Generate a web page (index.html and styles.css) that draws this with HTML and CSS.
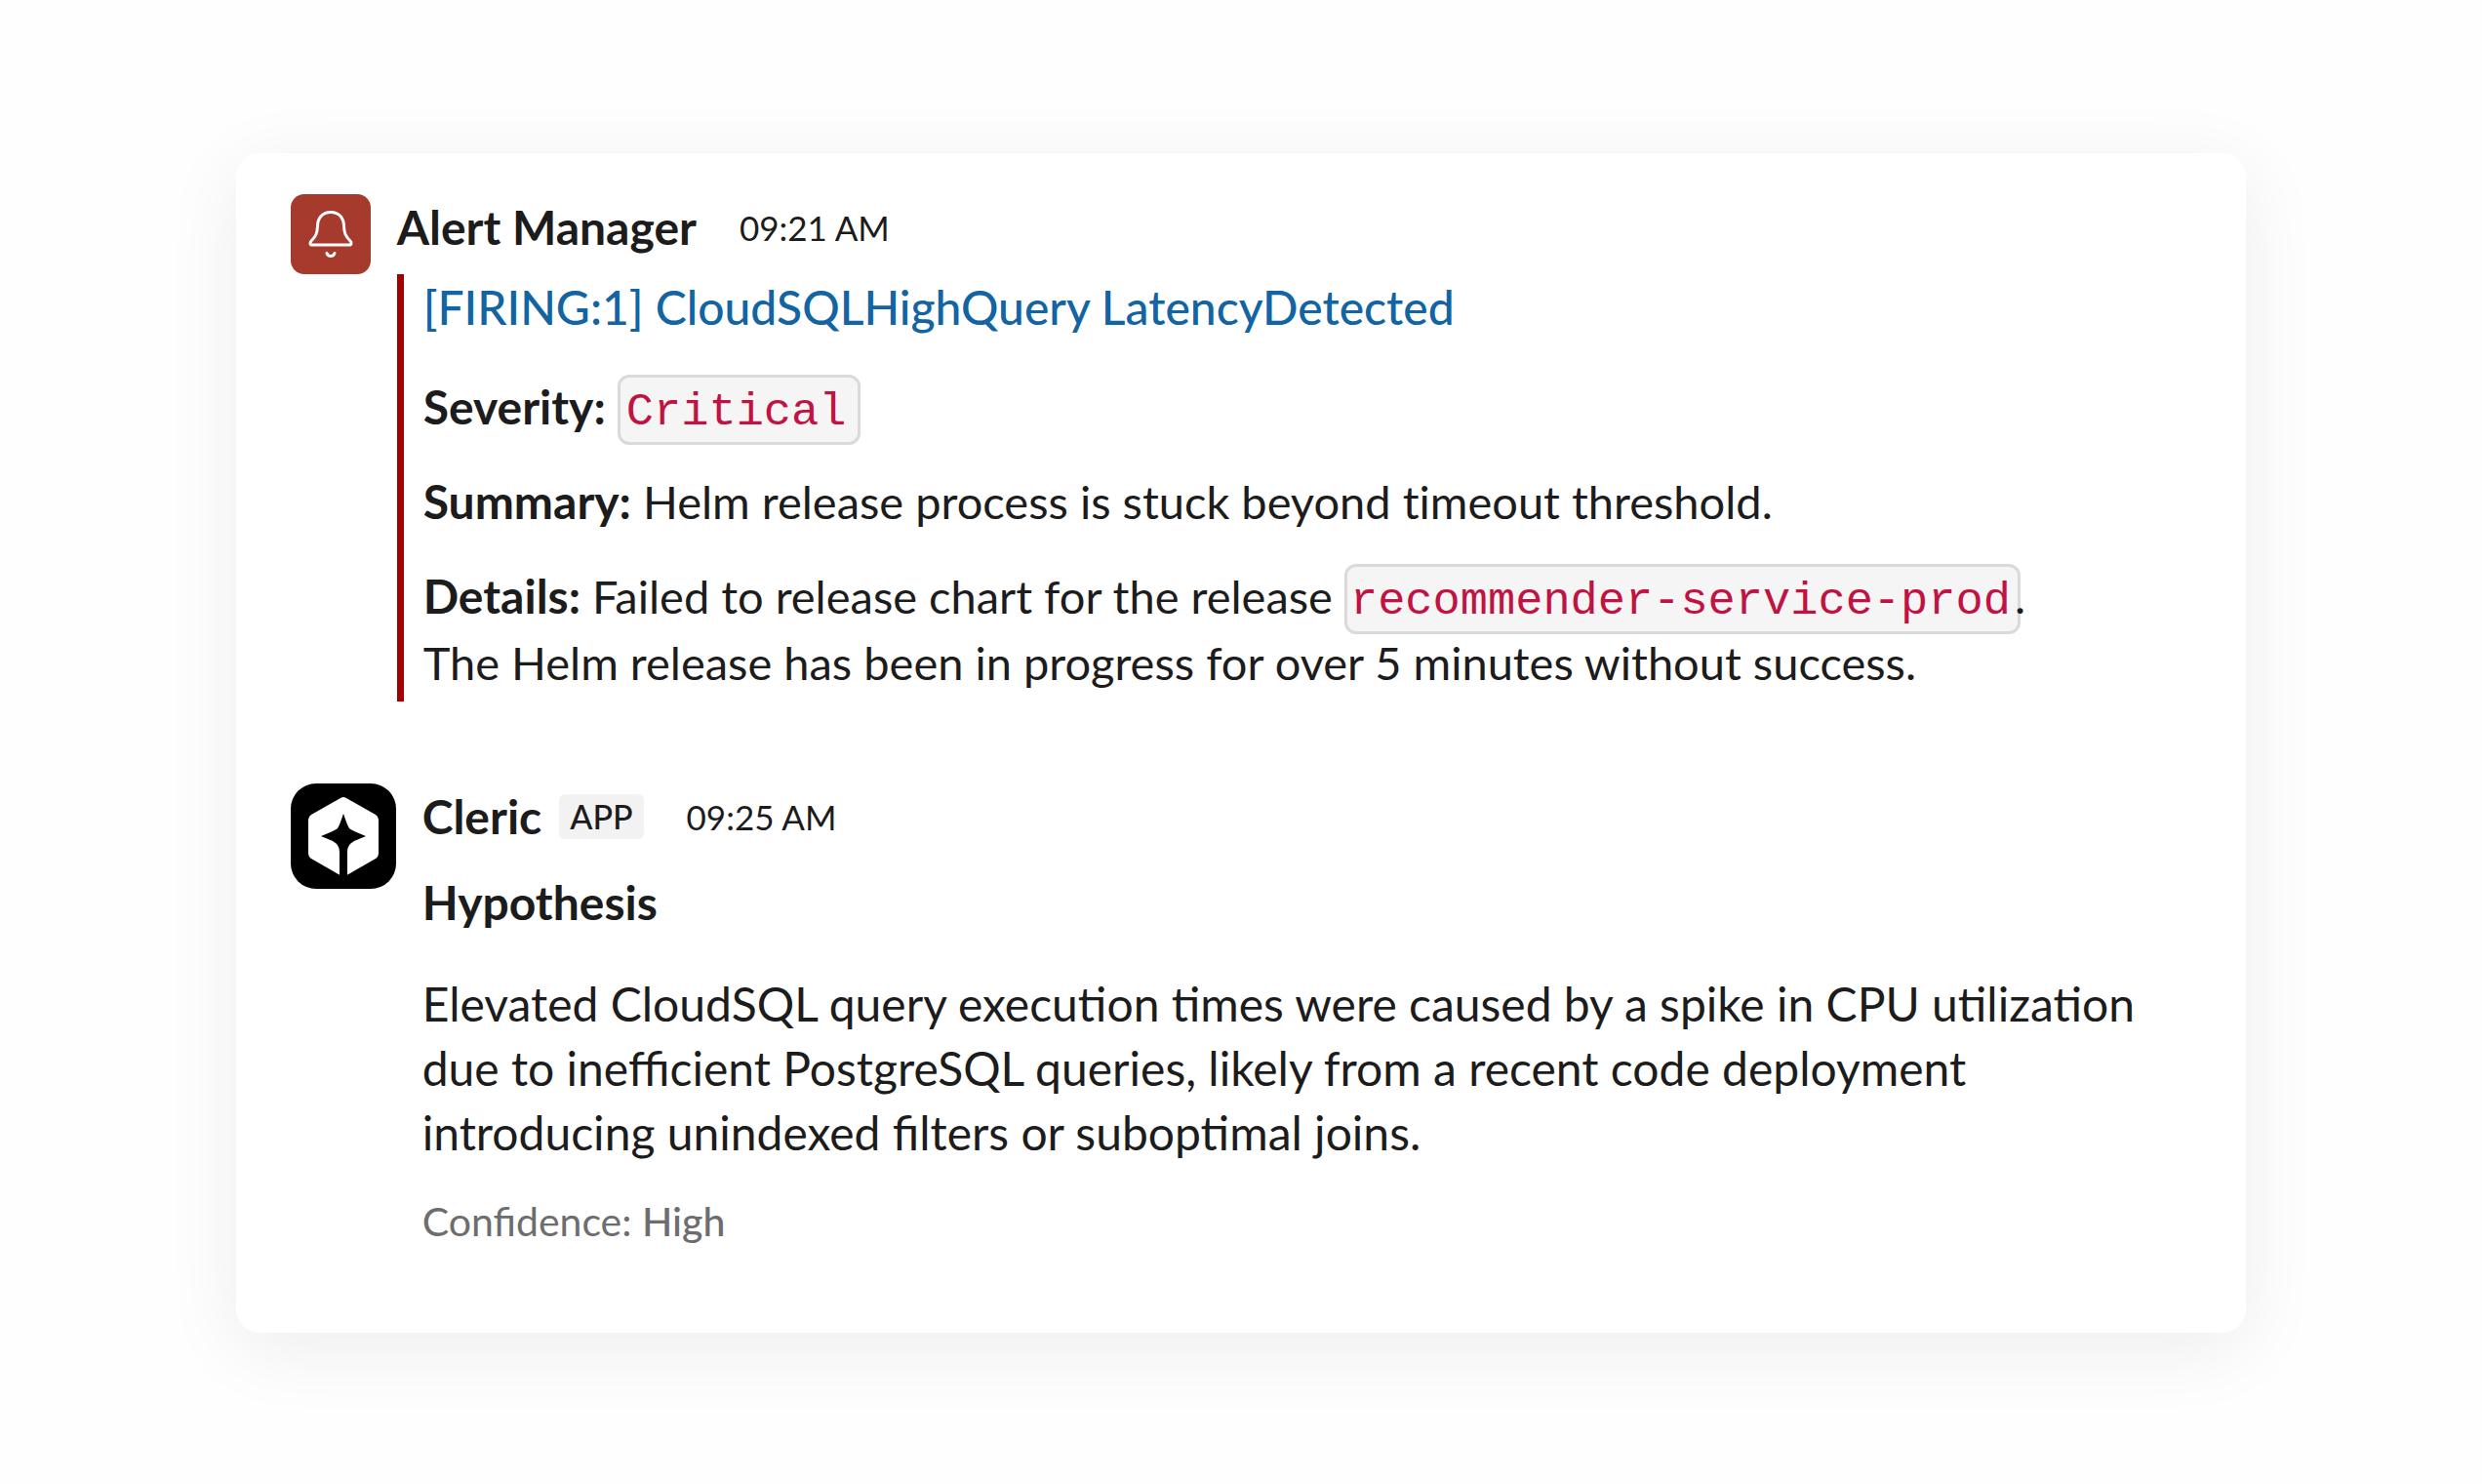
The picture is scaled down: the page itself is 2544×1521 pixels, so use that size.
FILE: index.html
```
<!DOCTYPE html>
<html lang="en">
<head>
    <meta charset="UTF-8">
    <meta name="viewport" content="width=device-width, initial-scale=1.0">
    <title>Alert thread</title>
    <link rel="stylesheet" href="styles.css">
</head>
<body>
    <main class="thread">
        <article class="message alert">
            <div class="avatar avatar-alert">
                <svg viewBox="0 0 82 82" aria-hidden="true">
                    <path d="M22 52 C19 52 20 49 21 48 C26 43 27 40 27.500 33 C27.500 25 32 18.500 41 18.500 C50 18.500 54.500 25 54.500 33 C55 40 56 43 61 48 C62 49 63 52 60 52 Z"/>
                    <path d="M37 60.500 Q38 63.500 41 63.500 Q44 63.500 45 60.500"/>
                </svg>
            </div>
            <div class="body">
                <header>
                    <h2>Alert Manager</h2>
                    <time>09:21 AM</time>
                </header>
                <div class="attachment">
                    <a class="title" href="#">[FIRING:1] CloudSQLHighQuery LatencyDetected</a>
                    <p class="first"><b>Severity:</b> <code class="severity">Critical</code></p>
                    <p><b>Summary:</b> Helm release process is stuck beyond timeout threshold.</p>
                    <p><b>Details:</b> Failed to release chart for the release <code>recommender-service-prod</code>.<br>
                    The Helm release has been in progress for over 5 minutes without success.</p>
                </div>
            </div>
        </article>

        <article class="message cleric">
            <div class="avatar avatar-cleric">
                <svg viewBox="0 0 108 108" aria-hidden="true">
                    <path class="hex" d="M51 15 Q54 13 57 15 L87 32 Q90 34 90 37 V71 Q90 75 87 77 L54 96 L21 77 Q18 75 18 71 V37 Q18 34 21 32 Z"/>
                    <path class="star" d="M54 31 C56 36 57 41 60 46 Q62 48 77 54 L65 59 C60 62 58 65 58 71 V97 H50 V71 C50 65 48 62 43 59 L31 54 Q46 48 48 46 C51 41 52 36 54 31 Z"/>
                </svg>
            </div>
            <div class="body">
                <header>
                    <h2>Cleric</h2>
                    <span class="badge">APP</span>
                    <time>09:25 AM</time>
                </header>
                <h3>Hypothesis</h3>
                <p class="hypothesis">Elevated CloudSQL query execution times were caused by a spike in CPU utilization<br>
                due to inefficient PostgreSQL queries, likely from a recent code deployment<br>
                introducing unindexed filters or suboptimal joins.</p>
                <p class="confidence">Confidence: <b>High</b></p>
            </div>
        </article>
    </main>
</body>
</html>
```
FILE: styles.css
```
* {
    box-sizing: border-box;
}
body {
    margin: 0;
    padding: 157px 9.5% 150px;
    background: #fefefe;
    color: #1d1c1d;
    font-family: Lato, sans-serif;
    font-size: 48px;
    line-height: 68px;
}
h2, h3, p {
    margin: 0;
    font-size: 48px;
}
.thread {
    padding: 42px 56px 80px;
    border-radius: 24px;
    background: #fff;
    box-shadow: 0 16px 80px rgba(0, 0, 0, 0.07);
}
.message {
    display: flex;
    align-items: flex-start;
    gap: 27px;
}
.body {
    flex: 1;
}
header {
    display: flex;
    align-items: center;
}
time {
    margin-left: 44px;
    font-size: 35px;
}
.avatar {
    flex: none;
    overflow: hidden;
}
.avatar svg {
    display: block;
    width: 100%;
}
.avatar-alert {
    width: 82px;
    border-radius: 14px;
    background: #a63a2c;
}
.avatar-alert path {
    fill: none;
    stroke: #fff;
    stroke-width: 3;
    stroke-linecap: round;
    stroke-linejoin: round;
}
.attachment {
    margin-top: 14px;
    padding: 0 0 6px 20px;
    border-left: 7px solid #a30000;
    font-variant-ligatures: none;
}
.title {
    color: #1264a3;
    font-weight: 500;
    text-decoration: none;
}
.attachment p {
    margin-top: 29px;
    font-size: 47px;
}
.attachment .first {
    margin-top: 34px;
}
.attachment b {
    font-size: 48px;
}
code {
    margin-right: -6px;
    padding: 9px 7px 4px 3px;
    border: 3px solid #dadada;
    border-radius: 12px;
    background: #f5f5f5;
    color: #c01343;
    font-family: "Liberation Mono", monospace;
    font-size: 47px;
    line-height: 48px;
}
.severity {
    padding-right: 12px;
    padding-left: 6px;
}
.cleric {
    margin-top: 84px;
}
.avatar-cleric {
    width: 108px;
    border-radius: 26px;
    background: #000;
}
.hex {
    fill: #fff;
}
.star {
    fill: #000;
}
.badge {
    margin-left: 18px;
    padding: 0 11px;
    border-radius: 6px;
    background: #f2f2f2;
    font-weight: 500;
    font-size: 34px;
    line-height: 46px;
}
h3 {
    margin-top: 20px;
}
.hypothesis {
    margin-top: 37px;
    line-height: 66px;
}
.confidence {
    margin-top: 24px;
    color: #6d6d6e;
    font-size: 41px;
}
.confidence b {
    font-weight: 500;
}
```
